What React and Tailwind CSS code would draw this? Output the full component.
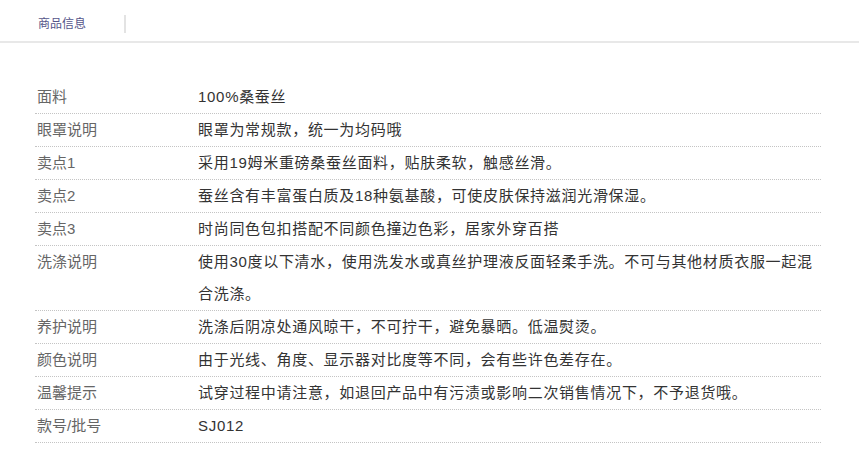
import React from 'react'

// product attribute rows
const rows = [
  ['面料', '100%桑蚕丝'],
  ['眼罩说明', '眼罩为常规款，统一为均码哦'],
  ['卖点1', '采用19姆米重磅桑蚕丝面料，贴肤柔软，触感丝滑。'],
  ['卖点2', '蚕丝含有丰富蛋白质及18种氨基酸，可使皮肤保持滋润光滑保湿。'],
  ['卖点3', '时尚同色包扣搭配不同颜色撞边色彩，居家外穿百搭'],
  ['洗涤说明', '使用30度以下清水，使用洗发水或真丝护理液反面轻柔手洗。不可与其他材质衣服一起混合洗涤。'],
  ['养护说明', '洗涤后阴凉处通风晾干，不可拧干，避免暴晒。低温熨烫。'],
  ['颜色说明', '由于光线、角度、显示器对比度等不同，会有些许色差存在。'],
  ['温馨提示', '试穿过程中请注意，如退回产品中有污渍或影响二次销售情况下，不予退货哦。'],
  ['款号/批号', 'SJ012'],
]

export default function App() {
  return (
    <div
      className="w-[859px] h-[461px] bg-white overflow-hidden"
      style={{ fontFamily: '"Liberation Sans", "Noto Sans CJK SC", sans-serif' }}
    >
      {/* tab header */}
      <div className="h-[43px] border-b-2 border-[#e8e8e8] flex items-start pt-[15px]">
        <div className="w-[126px] h-[18px] border-r-2 border-[#e3e3e3] flex items-center pl-[38px]">
          <span className="text-[12px] leading-none text-[#55558a]">商品信息</span>
        </div>
      </div>

      {/* attribute table */}
      <div className="mt-[38px] ml-[35px] w-[786px]">
        {rows.map(([label, value]) => (
          <div key={label} className="flex border-b border-dotted border-[#c4c4c4] text-[15px] leading-[32px]">
            <div className="w-[163px] shrink-0 pl-[2px] text-[#666]">{label}</div>
            <div className="flex-1 tracking-[0.7px] text-[#333]">{value}</div>
          </div>
        ))}
      </div>
    </div>
  )
}
